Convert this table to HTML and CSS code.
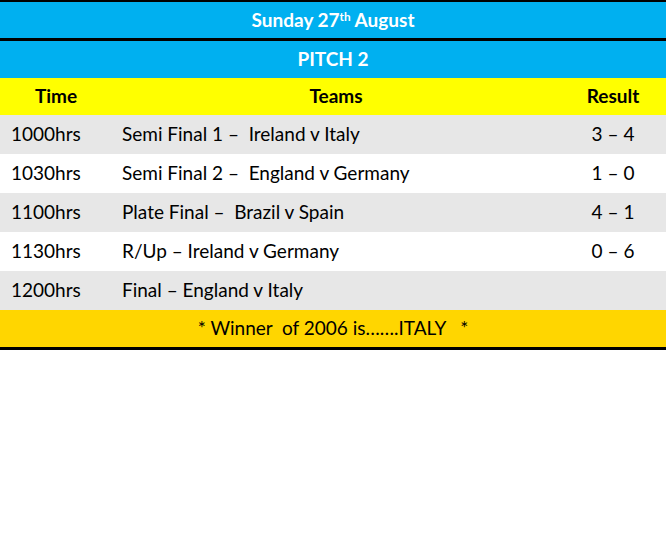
FILE: index.html
```html
<!DOCTYPE html>
<html>
<head>
<meta charset="utf-8">
<link rel="stylesheet" href="styles.css">
</head>
<body>
<table class="sched">
  <colgroup><col class="w-time"><col class="w-teams"><col class="w-res"></colgroup>
  <tr class="title day"><td colspan="3">Sunday 27<sup>th</sup> August</td></tr>
  <tr class="title pitch"><td colspan="3">PITCH 2</td></tr>
  <tr class="head"><td class="c-time">Time</td><td class="c-teams">Teams</td><td class="c-res">Result</td></tr>
  <tr class="row alt"><td class="c-time">1000hrs</td><td class="c-teams">Semi Final 1 –&nbsp; Ireland v Italy</td><td class="c-res">3 – 4</td></tr>
  <tr class="row"><td class="c-time">1030hrs</td><td class="c-teams">Semi Final 2 –&nbsp; England v Germany</td><td class="c-res">1 – 0</td></tr>
  <tr class="row alt"><td class="c-time">1100hrs</td><td class="c-teams">Plate Final –&nbsp; Brazil v Spain</td><td class="c-res">4 – 1</td></tr>
  <tr class="row"><td class="c-time">1130hrs</td><td class="c-teams">R/Up – Ireland v Germany</td><td class="c-res">0 – 6</td></tr>
  <tr class="row alt"><td class="c-time">1200hrs</td><td class="c-teams">Final – England v Italy</td><td class="c-res"></td></tr>
  <tr class="foot"><td colspan="3">* Winner&nbsp; of 2006 is…….ITALY &nbsp; *</td></tr>
</table>
</body>
</html>
```
FILE: styles.css
```css
html, body {
  margin: 0;
  padding: 0;
  background: #ffffff;
}
.sched {
  width: 666px;
  border-collapse: collapse;
  font-family: Lato, "Open Sans", sans-serif;
  font-size: 19px;
  line-height: 1.1;
  color: #000;
  table-layout: fixed;
}
.w-time { width: 112px; }
.w-teams { width: 448px; }
.w-res { width: 106px; }
.sched td {
  padding: 0;
  vertical-align: middle;
  white-space: nowrap;
}
.title td {
  background: #00b0f0;
  color: #fff;
  font-weight: bold;
  text-align: center;
  height: 36px;
}
.title sup {
  font-size: 0.62em;
  line-height: 0;
  vertical-align: 0.55em;
}
.day td {
  border-top: 2px solid #000;
  border-bottom: 3px solid #000;
}
.pitch td {
  height: 37px;
}
.head td {
  background: #ffff00;
  font-weight: bold;
  height: 37px;
  text-align: center;
}
.row td {
  height: 39px;
  background: #ffffff;
}
.row.alt td {
  background: #e7e7e7;
}
.row .c-time { padding-left: 11px; }
.row .c-teams { padding-left: 10px; }
.row .c-res { text-align: center; }
.foot td {
  background: #ffd600;
  text-align: center;
  height: 37px;
  border-bottom: 3px solid #000;
}
```
